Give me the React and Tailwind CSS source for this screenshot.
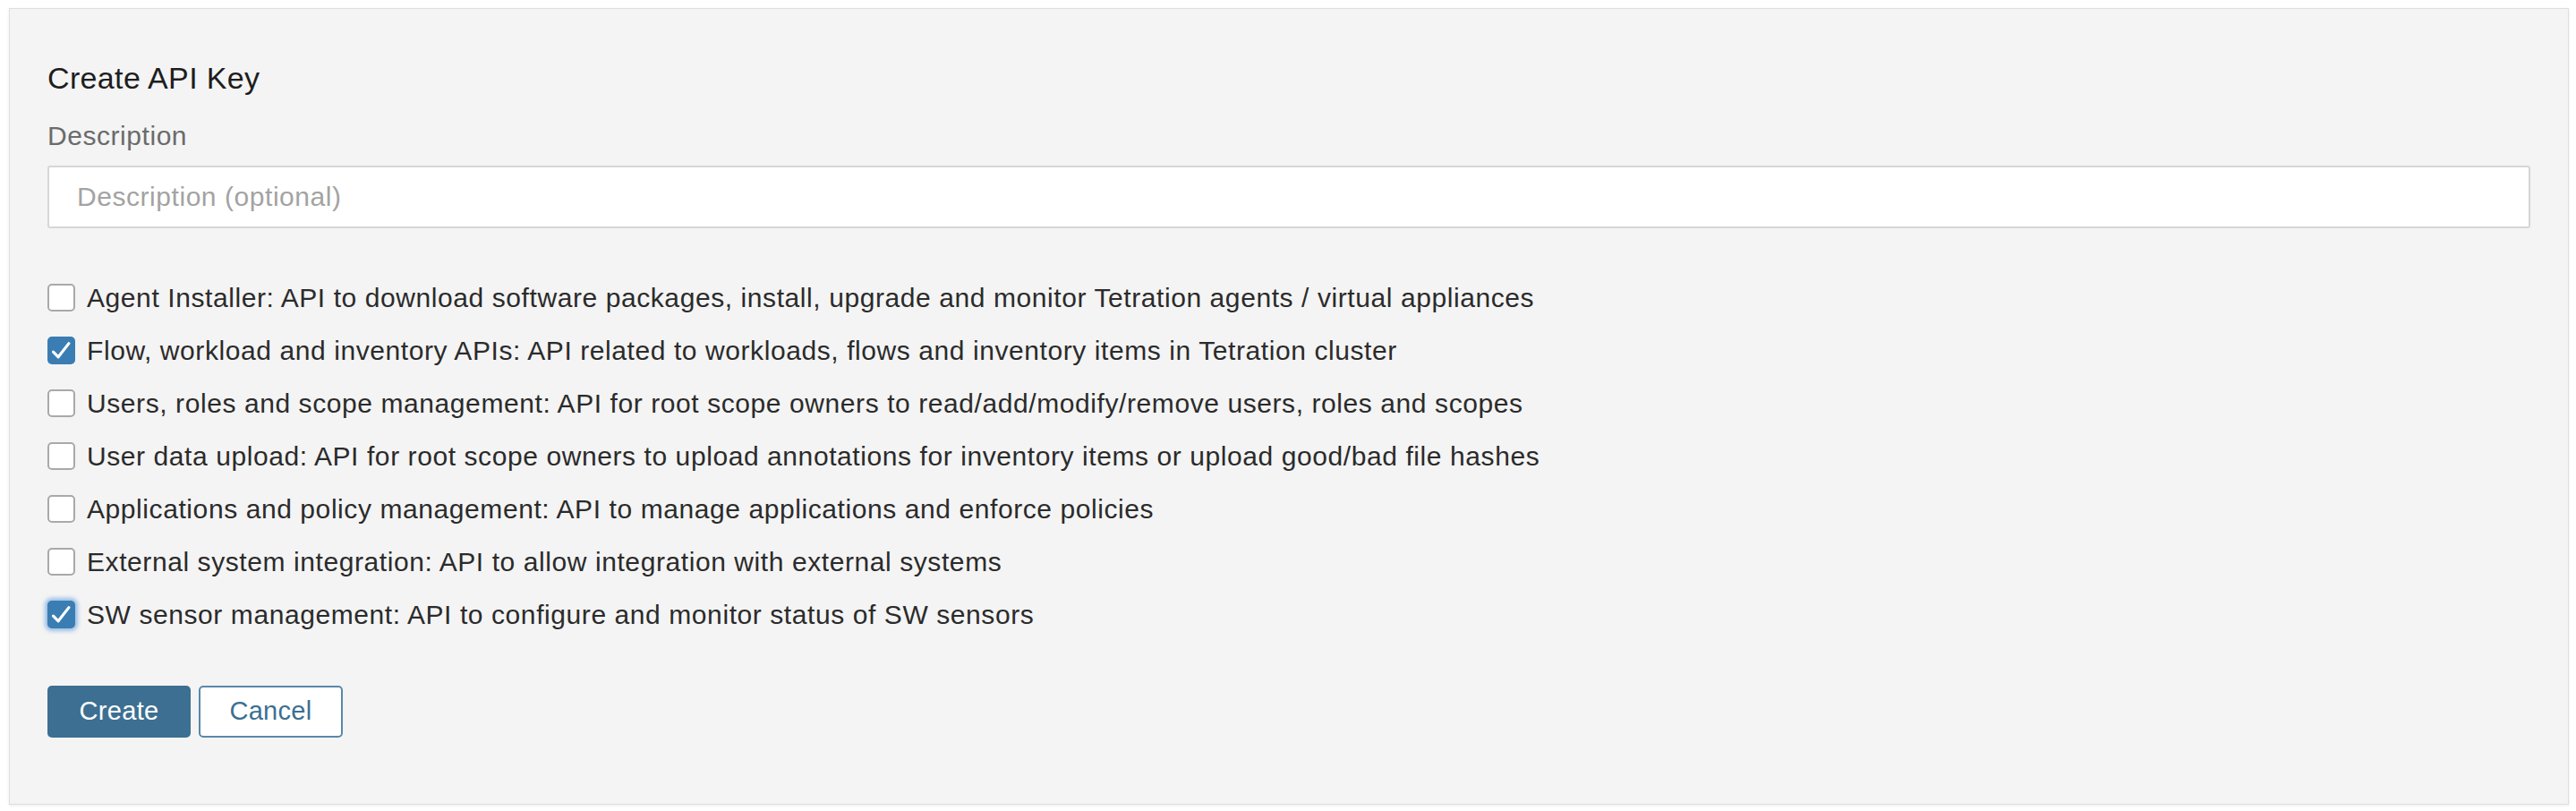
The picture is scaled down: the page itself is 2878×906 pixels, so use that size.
const options = [
    { label: 'Agent Installer: API to download software packages, install, upgrade and monitor Tetration agents / virtual appliances', checked: false },
    { label: 'Flow, workload and inventory APIs: API related to workloads, flows and inventory items in Tetration cluster', checked: true },
    { label: 'Users, roles and scope management: API for root scope owners to read/add/modify/remove users, roles and scopes', checked: false },
    { label: 'User data upload: API for root scope owners to upload annotations for inventory items or upload good/bad file hashes', checked: false },
    { label: 'Applications and policy management: API to manage applications and enforce policies', checked: false },
    { label: 'External system integration: API to allow integration with external systems', checked: false },
    { label: 'SW sensor management: API to configure and monitor status of SW sensors', checked: true, focused: true },
]

function Checkbox({ checked, focused }) {
    if (checked) {
        return (
            <span
                className={
                    'flex h-[31px] w-[31px] shrink-0 items-center justify-center rounded-[5px] bg-[#3a7db3] ' +
                    (focused ? 'shadow-[0_0_4px_3px_rgba(80,150,220,0.55)]' : '')
                }
            >
                <svg viewBox="0 0 24 24" className="h-[27px] w-[27px]" fill="none" stroke="#fff" strokeWidth="2.8" strokeLinecap="round" strokeLinejoin="round">
                    <path d="M4 13.5 L9 18.5 L19.5 5" />
                </svg>
            </span>
        )
    }
    return <span className="h-[31px] w-[31px] shrink-0 rounded-[5px] border-2 border-[#a9a9a9] bg-white" />
}

export default function App() {
    return (
        <div className="min-h-screen bg-white pl-[10px] pr-[8px] pt-[9px] font-['Liberation_Sans',Arial,sans-serif]">
            <div className="h-[890px] border border-[#dedede] bg-[#f4f4f4] px-[42px] pt-[59px] shadow-[0_1px_3px_rgba(0,0,0,0.08)]">
                <h2 className="text-[34px] leading-[36px] tracking-[0.35px] text-[#1e1e1e]">Create API Key</h2>

                <label className="mt-[31px] block text-[30px] leading-[32px] tracking-[0.55px] text-[#6b6b6b]">Description</label>
                <input
                    type="text"
                    placeholder="Description (optional)"
                    className="mt-[17px] block h-[70px] w-full rounded-[3px] border-2 border-[#d6d6d6] bg-white px-[31px] text-[30px] tracking-[0.55px] text-[#333] outline-none placeholder:text-[#a3a3a3]"
                />

                {/* permission checkboxes */}
                <div className="mt-[48px]">
                    {options.map((o) => (
                        <div key={o.label} className="flex h-[59px] items-center gap-[13px]">
                            <Checkbox checked={o.checked} focused={o.focused} />
                            <span className="text-[30px] leading-[34px] tracking-[0.58px] text-[#2b2b2b]">{o.label}</span>
                        </div>
                    ))}
                </div>

                <div className="mt-[50px] flex gap-[9px]">
                    <button className="h-[58px] w-[160px] rounded-[5px] bg-[#3c6f92] text-[29px] tracking-[0.3px] text-white">Create</button>
                    <button className="h-[58px] w-[161px] rounded-[5px] border-2 border-[#5a88aa] bg-white text-[29px] tracking-[0.3px] text-[#3c6f92]">Cancel</button>
                </div>
            </div>
        </div>
    )
}
